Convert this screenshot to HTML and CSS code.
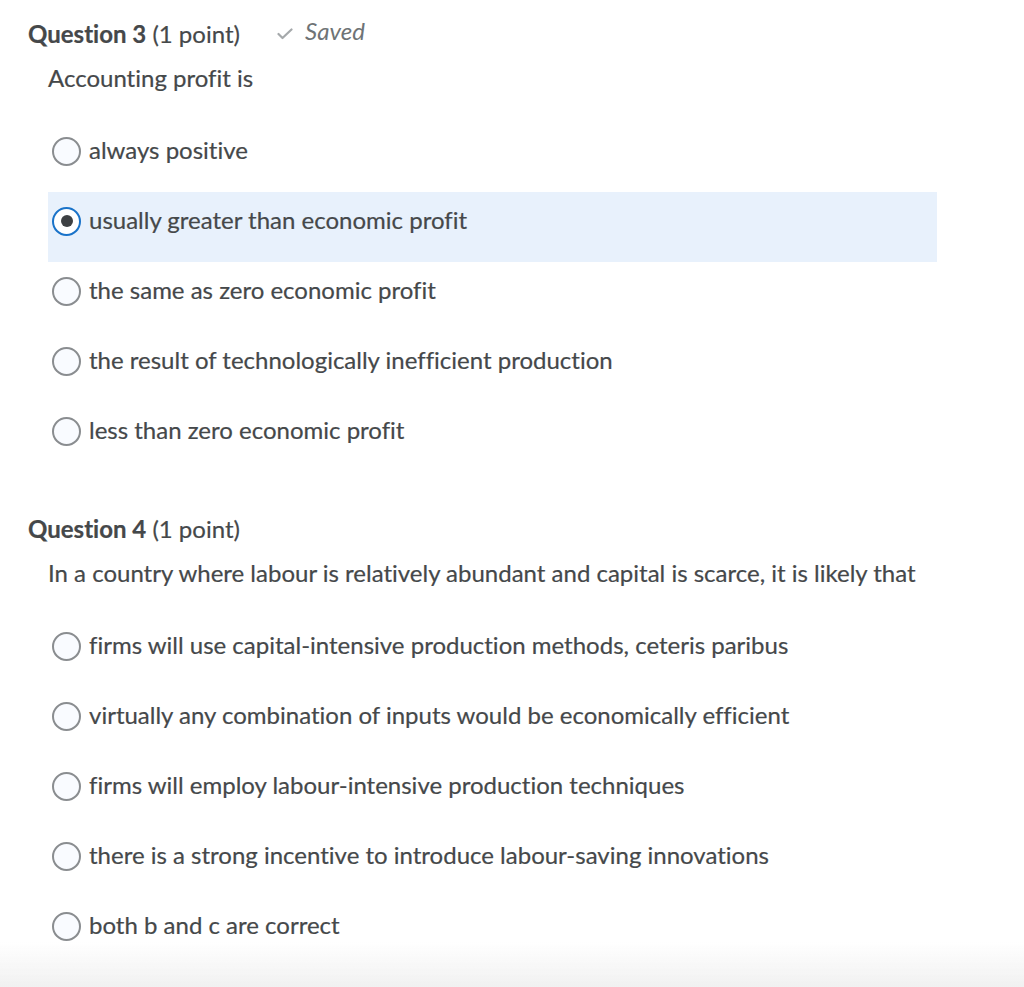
FILE: index.html
```html
<!DOCTYPE html>
<html lang="en">
<head>
<meta charset="utf-8">
<title>Quiz</title>
<link rel="stylesheet" href="styles.css">
</head>
<body>
<main class="quiz">
  <section class="question">
    <h2 class="q-head"><span class="q-num">Question 3</span> (1 point) <span class="saved"><svg class="check" viewBox="0 0 16 16" width="16" height="16"><path d="M1.5 9 L5.5 13 L14.5 4.5" fill="none" stroke="currentColor" stroke-width="2.2" stroke-linecap="round" stroke-linejoin="round"/></svg><em>Saved</em></span></h2>
    <p class="prompt">Accounting profit is</p>
    <ul class="options">
      <li class="option"><span class="radio"></span><span>always positive</span></li>
      <li class="option selected"><span class="radio checked"></span><span>usually greater than economic profit</span></li>
      <li class="option"><span class="radio"></span><span>the same as zero economic profit</span></li>
      <li class="option"><span class="radio"></span><span>the result of technologically inefficient production</span></li>
      <li class="option"><span class="radio"></span><span>less than zero economic profit</span></li>
    </ul>
  </section>
  <section class="question">
    <h2 class="q-head"><span class="q-num">Question 4</span> (1 point)</h2>
    <p class="prompt">In a country where labour is relatively abundant and capital is scarce, it is likely that</p>
    <ul class="options">
      <li class="option"><span class="radio"></span><span>firms will use capital-intensive production methods, ceteris paribus</span></li>
      <li class="option"><span class="radio"></span><span>virtually any combination of inputs would be economically efficient</span></li>
      <li class="option"><span class="radio"></span><span>firms will employ labour-intensive production techniques</span></li>
      <li class="option"><span class="radio"></span><span>there is a strong incentive to introduce labour-saving innovations</span></li>
      <li class="option"><span class="radio"></span><span>both b and c are correct</span></li>
    </ul>
  </section>
</main>
<div class="fade"></div>
</body>
</html>
```
FILE: styles.css
```css
html, body {
  margin: 0;
  padding: 0;
  background: #ffffff;
}
body {
  font-family: Lato, "Open Sans", "Liberation Sans", sans-serif;
  color: #45484a;
  font-size: 24px;
  font-variant-ligatures: none;
  -webkit-text-stroke: 0.2px #45484a;
}
.quiz {
  padding: 19px 0 0 28px;
  width: 909px;
}
.question + .question {
  margin-top: 42px;
}
.q-head {
  margin: 0;
  font-size: 24px;
  font-weight: 400;
  line-height: 30px;
  display: flex;
  align-items: center;
  white-space: pre;
}
.q-num {
  font-weight: 700;
}
.saved {
  display: inline-flex;
  align-items: center;
  margin-left: 31px;
  margin-top: -6px;
  color: #6e7376;
  -webkit-text-stroke: 0;
}
.check {
  color: #a5a9ab;
  margin-right: 12px;
  margin-top: 4px;
}
.saved em {
  font-style: italic;
}
.prompt {
  margin: 14px 0 0 20px;
  line-height: 30px;
}
.options {
  list-style: none;
  margin: 29px 0 0 20px;
  padding: 0;
}
.option {
  height: 70px;
  box-sizing: border-box;
  padding: 14px 0 26px 4px;
  display: flex;
  align-items: center;
  gap: 8px;
  line-height: 30px;
}
.option span:last-child {
  position: relative;
  top: -1px;
}
.option.selected {
  background: #e8f1fc;
}
.radio {
  width: 29px;
  height: 29px;
  box-sizing: border-box;
  border: 2px solid #8a8d90;
  border-radius: 50%;
  background: #f9fbff;
  display: flex;
  align-items: center;
  justify-content: center;
  flex: none;
}
.radio.checked {
  border-color: #1a73c9;
  background: #ffffff;
}
.radio.checked::after {
  content: "";
  width: 12px;
  height: 12px;
  border-radius: 50%;
  background: #3d4043;
}
.fade {
  position: fixed;
  left: 0;
  right: 0;
  bottom: 0;
  height: 45px;
  background: linear-gradient(to bottom, rgba(255,255,255,0), #f1f1f1);
  pointer-events: none;
}
```
